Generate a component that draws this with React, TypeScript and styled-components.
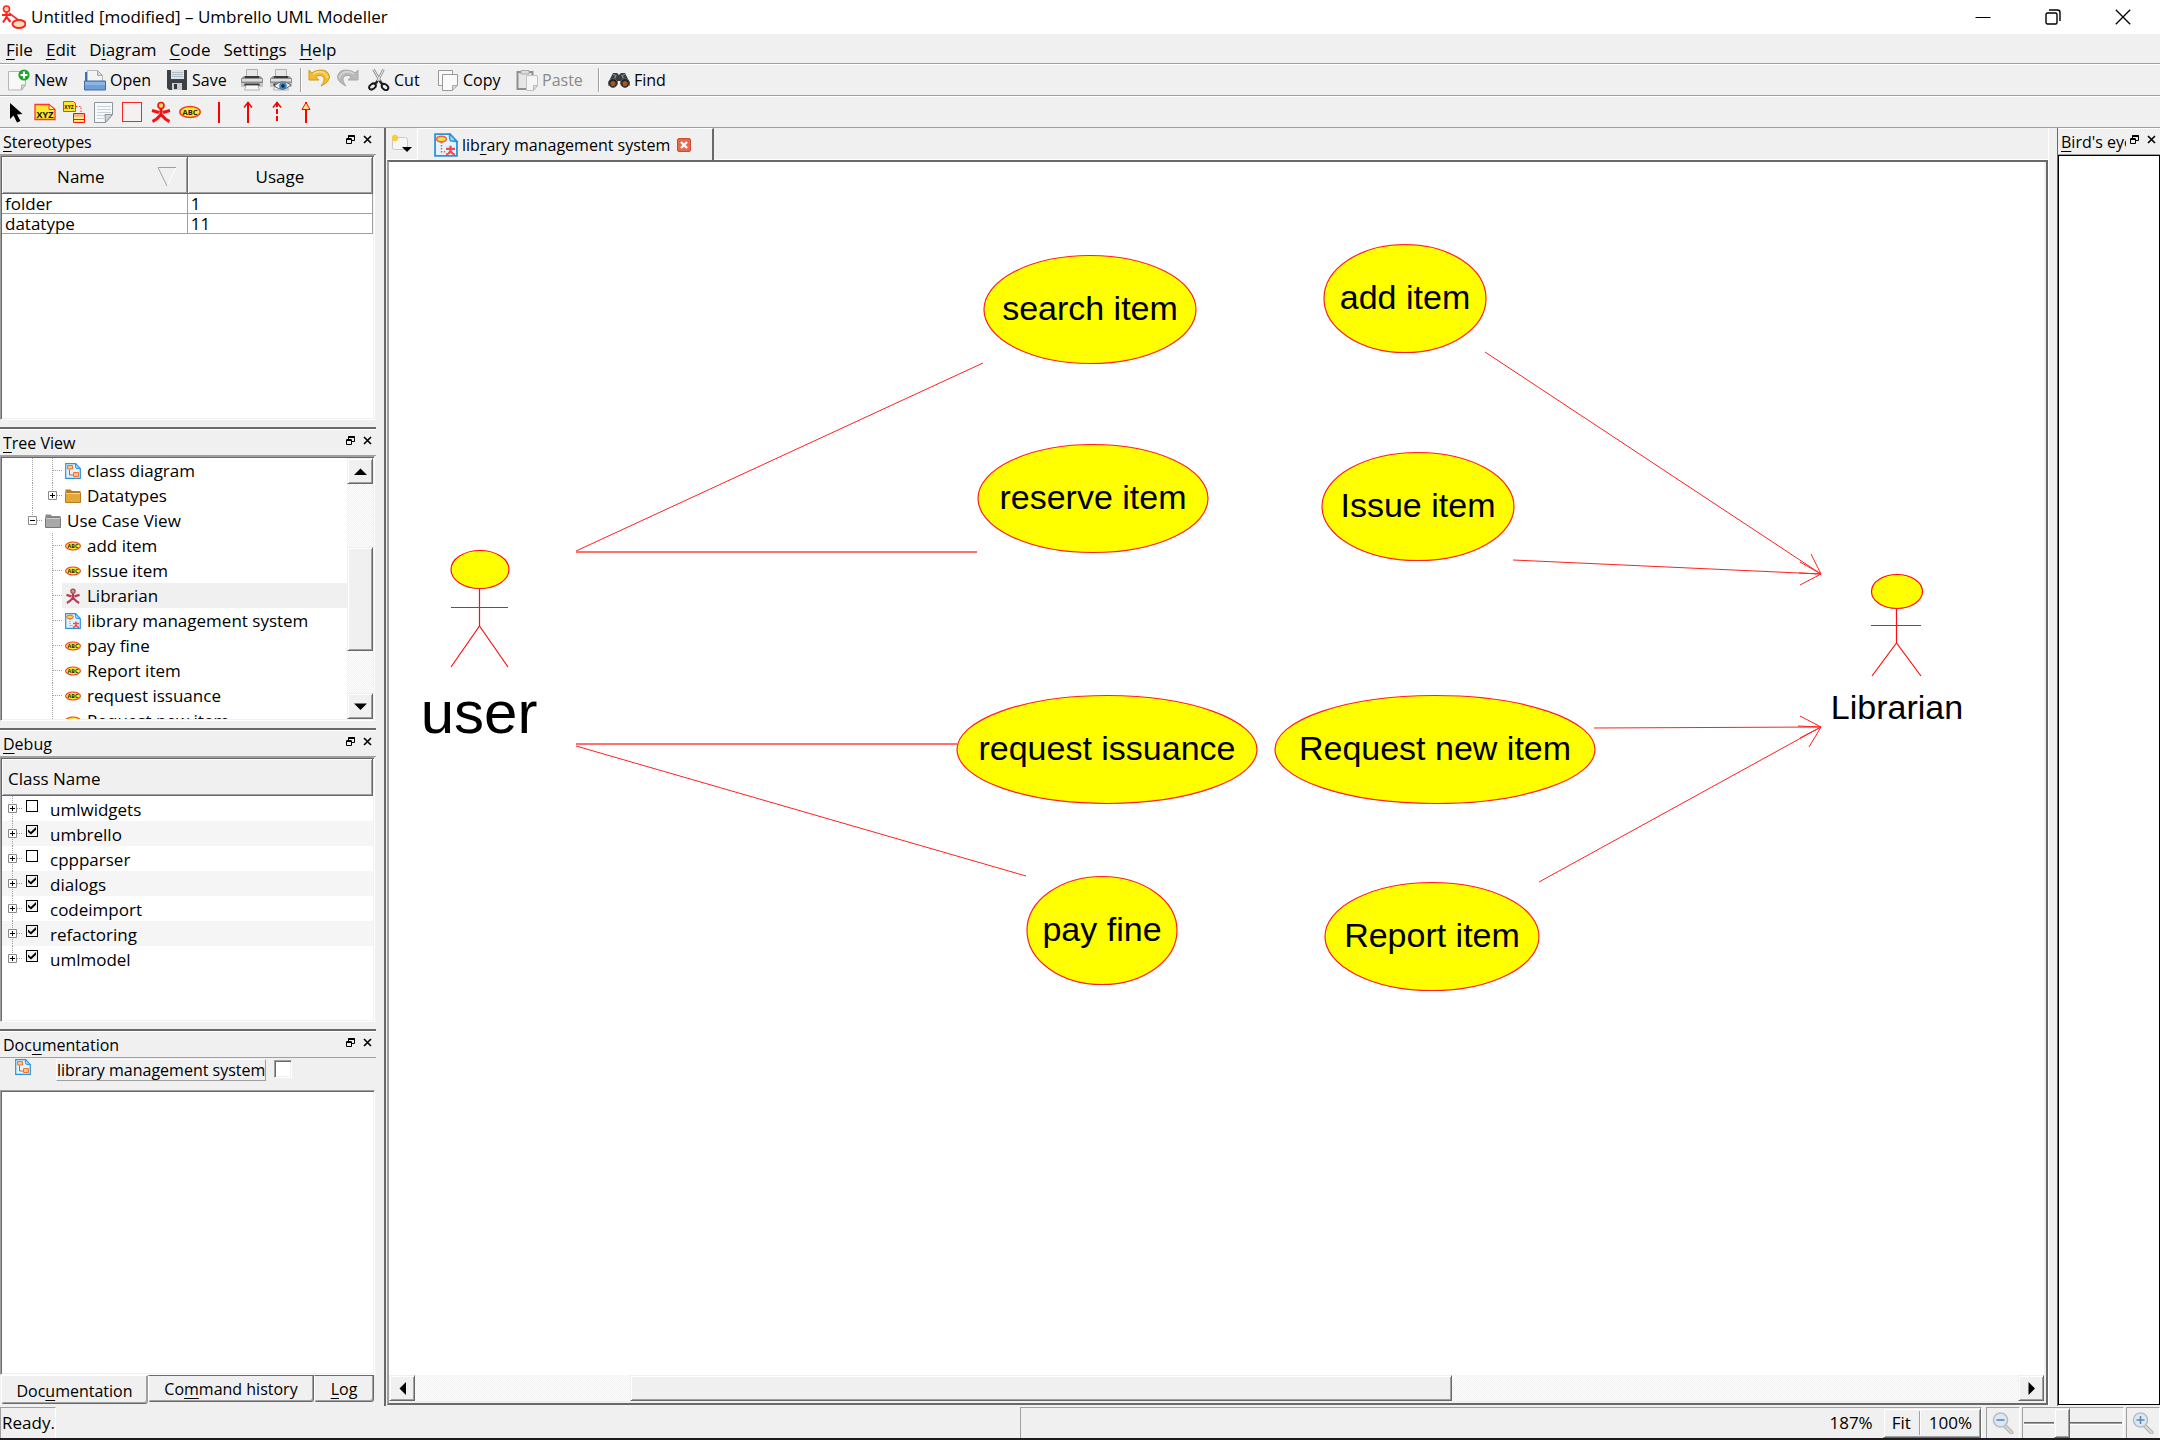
import React from "react";
import styled, { createGlobalStyle, css } from "styled-components";

const FACE = "#f0f0f0";
const SHADOW = "#a0a0a0";
const DARK = "#696969";

const GlobalStyle = createGlobalStyle`
  * { box-sizing: border-box; }
  body { margin: 0; background: ${FACE}; color: #000; }
  body, button, input, textarea, table {
    font-family: "Open Sans", "Noto Sans", sans-serif;
    font-size: 17px;
    line-height: 24px;
  }
  button { color: inherit; }
`;

const sunken = css`
  border: 1px solid;
  border-color: ${SHADOW} #fff #fff ${SHADOW};
  box-shadow: inset 1px 1px 0 ${DARK}, inset -1px -1px 0 ${FACE};
`;

const raised = css`
  border: 1px solid;
  border-color: ${FACE} ${DARK} ${DARK} ${FACE};
  box-shadow: inset 1px 1px 0 #fff, inset -1px -1px 0 ${SHADOW};
  background: ${FACE};
`;

/* ---------- window ---------- */

const Window = styled.div`
  display: flex;
  flex-direction: column;
  height: 100vh;
  border-bottom: 2px solid #1f1a1f;
  overflow: hidden;
`;

const TitleBar = styled.header`
  display: flex;
  align-items: center;
  height: 34px;
  flex: none;
  background: #fff;
  padding: 0 2px 0 1px;
`;

const WindowTitle = styled.h1`
  flex: 1;
  margin: 0 0 0 5px;
  font-size: 17px;
  font-weight: 400;
`;

const CaptionButton = styled.button`
  width: 70px;
  height: 34px;
  display: grid;
  place-items: center;
  border: 0;
  padding: 0;
  background: none;
`;

const MenuBar = styled.nav`
  display: flex;
  flex: none;
  gap: 13px;
  height: 30px;
  padding: 4px 6px 0;
  border-bottom: 1px solid ${SHADOW};
`;

const MenuButton = styled.button`
  border: 0;
  padding: 0;
  background: none;
  height: 24px;
`;

const Key = styled.u`
  text-decoration-thickness: 1px;
  text-underline-offset: 3px;
`;

const ToolBar = styled.div`
  display: flex;
  flex: none;
  align-items: center;
  height: 32px;
  border-top: 1px solid #fff;
  border-bottom: 1px solid ${SHADOW};
`;

const DrawBar = styled(ToolBar)`
  gap: 7px;
  padding-left: 5px;
`;

const ToolButton = styled.button<{ $w: number }>`
  display: flex;
  align-items: center;
  gap: 4px;
  width: ${(p) => p.$w}px;
  flex: none;
  height: 28px;
  border: 0;
  padding: 0;
  background: none;
  font-size: 16px;
  white-space: nowrap;
  &:disabled { color: #8a8a8a; }
  svg { flex: none; }
`;

const ToolGroup = styled.div`
  display: flex;
  align-items: center;
  padding-left: 8px;
  i + & { padding-left: 6px; }
  i + & + i + & { padding-left: 8px; }
`;

const ToolRule = styled.i`
  width: 2px;
  height: 24px;
  background: ${SHADOW};
  border-right: 1px solid #fff;
`;

const Workspace = styled.div`
  flex: 1;
  min-height: 0;
  display: grid;
  grid-template-columns: 376px minmax(0, 1fr) 103px;
  column-gap: 8px;
`;

/* ---------- docks ---------- */

const DockColumn = styled.aside`
  display: flex;
  flex-direction: column;
  min-height: 0;
`;

const Dock = styled.section<{ $share: number }>`
  flex: ${(p) => p.$share} 1 0;
  min-height: 0;
  display: flex;
  flex-direction: column;
  padding-bottom: 7px;
  & + & { border-top: 2px solid ${DARK}; }
  &:last-child { padding-bottom: 0; }
`;

const DockTitle = styled.div`
  display: flex;
  align-items: center;
  flex: none;
  height: 27px;
  padding-left: 3px;
  border-top: 1px solid #fff;
  border-bottom: 1px solid ${SHADOW};
`;

const DockName = styled.h2`
  flex: 1;
  min-width: 0;
  margin: 0;
  overflow: hidden;
  white-space: nowrap;
  font-size: 16px;
  font-weight: 400;
`;

const DockButton = styled.button`
  width: 17px;
  height: 17px;
  flex: none;
  display: grid;
  place-items: center;
  border: 0;
  padding: 0;
  background: none;
  margin-bottom: 4px;
`;

const Sunken = styled.div`
  ${sunken}
  flex: 1;
  min-height: 0;
  margin-right: 1px;
  padding: 1px;
  background: #fff;
  overflow: hidden;
`;

const StereoTable = styled.table`
  width: 100%;
  border-collapse: collapse;
  table-layout: fixed;
  td {
    height: 20px;
    padding: 0 3px;
    border-right: 1px solid ${SHADOW};
    border-bottom: 1px solid ${SHADOW};
    line-height: 19px;
  }
`;

const StereoHead = styled.th`
  height: 36px;
  padding: 0;
  font-weight: 400;
  background: ${FACE};
  border-right: 1px solid ${DARK};
  border-bottom: 1px solid ${DARK};
  box-shadow: inset 1px 1px 0 #fff, inset -1px -1px 0 ${SHADOW};
`;

const HeadCell = styled.div`
  display: flex;
  align-items: center;
  justify-content: center;
  gap: 52px;
  padding-top: 4px;
`;

const SortableCell = styled(HeadCell)`
  padding: 4px 9px 0 54px;
`;

const TreeFrame = styled(Sunken)`
  display: flex;
`;

const TreeList = styled.ul`
  flex: 1;
  min-width: 0;
  margin: 0;
  padding: 0;
  list-style: none;
  overflow: hidden;
`;

const TreeRow = styled.li`
  display: flex;
  height: 25px;
`;

type GuideProps = { $line?: "full" | "up" | "down" | "none"; $branch?: boolean };

const Guide = styled.span<GuideProps>`
  position: relative;
  width: 20px;
  flex: none;
  display: grid;
  place-items: center;
  &::before {
    content: "";
    position: absolute;
    left: 10px;
    top: ${(p) => (p.$line === "down" ? "12px" : "0")};
    bottom: ${(p) => (p.$line === "up" ? "12px" : "0")};
    border-left: ${(p) => (p.$line && p.$line !== "none" ? `1px dotted ${SHADOW}` : "0")};
  }
  &::after {
    content: "";
    position: absolute;
    left: 10px;
    right: 0;
    top: 12px;
    border-top: ${(p) => (p.$branch ? `1px dotted ${SHADOW}` : "0")};
  }
`;

const ExpandButton = styled.button`
  position: relative;
  z-index: 1;
  width: 9px;
  height: 9px;
  display: block;
  padding: 0;
  border: 0;
  background: #fff;
  line-height: 0;
`;

const TreeLabel = styled.span<{ $selected?: boolean }>`
  flex: 1;
  display: flex;
  align-items: center;
  gap: 6px;
  padding-left: 3px;
  white-space: nowrap;
  background: ${(p) => (p.$selected ? FACE : "none")};
  svg { flex: none; }
`;

/* ---------- scroll bars ---------- */

const dither = css`
  background: repeating-conic-gradient(#ffffff 0% 25%, ${FACE} 0% 50%) 0 0 / 2px 2px;
`;

const VScroll = styled.div`
  ${dither}
  width: 26px;
  flex: none;
  display: flex;
  flex-direction: column;
`;

const HScroll = styled.div`
  ${dither}
  height: 26px;
  flex: none;
  display: flex;
`;

const ScrollButton = styled.button`
  ${raised}
  width: 26px;
  height: 26px;
  flex: none;
  padding: 0;
  display: grid;
  place-items: center;
`;

const Room = styled.div<{ $share: number }>`
  flex: ${(p) => p.$share} 1 0;
`;

const Thumb = styled(Room)`
  ${raised}
`;

/* ---------- debug ---------- */

const DebugHead = styled.div`
  height: 37px;
  padding: 8px 0 0 6px;
  background: ${FACE};
  border-right: 1px solid ${DARK};
  border-bottom: 1px solid ${DARK};
  box-shadow: inset 1px 1px 0 #fff, inset -1px -1px 0 ${SHADOW};
`;

const DebugList = styled(TreeList)`
  li:nth-child(even) { background: #f5f5f5; }
`;

const DebugLabel = styled.label`
  display: flex;
  padding: 2px 0 0 4px;
  gap: 12px;
`;

const Tick = styled.input`
  appearance: none;
  width: 12px;
  height: 12px;
  flex: none;
  margin: 2px 0 0;
  border: 1px solid #000;
  background: #fff;
  &:checked { background: ${FACE}; }
  &:checked::before {
    content: "";
    display: block;
    width: 8px;
    height: 8px;
    margin: 1px;
    background: #000;
    clip-path: polygon(0 30%, 35% 62%, 100% 0, 100% 34%, 38% 95%, 0 62%);
  }
`;

/* ---------- documentation ---------- */

const DocRow = styled.div`
  display: flex;
  flex: none;
  height: 32px;
  padding: 1px 0 0 15px;
`;

const DocName = styled.label`
  height: 22px;
  line-height: 20px;
  margin-left: 25px;
  border: 1px solid;
  border-color: #fff ${SHADOW} ${SHADOW} #fff;
  font-size: 16px;
`;

const DocCheck = styled.input`
  appearance: none;
  ${sunken}
  width: 18px;
  height: 18px;
  margin: 1px 0 0 8px;
  background: #fff;
`;

const DocText = styled.textarea`
  ${sunken}
  flex: 1;
  width: calc(100% - 1px);
  resize: none;
  outline: 0;
  background: #fff;
`;

const BottomTabs = styled.div`
  display: flex;
  flex: none;
  align-items: flex-start;
  height: 31px;
  padding: 0 2px 0 1px;
`;

const BottomTab = styled.button<{ $on?: boolean; $w: number }>`
  width: ${(p) => p.$w}px;
  height: ${(p) => (p.$on ? 29 : 27)}px;
  padding: ${(p) => (p.$on ? "2px 0 0" : "0")};
  background: ${FACE};
  font-size: 16px;
  white-space: nowrap;
  border: 1px solid;
  border-color: ${(p) => (p.$on ? `#fff ${SHADOW} ${DARK} #fff` : `${DARK} ${DARK} ${DARK} #fff`)};
  border-radius: 0 0 3px 3px;
  box-shadow: inset -1px -1px 0 ${SHADOW};
`;

/* ---------- canvas ---------- */

const Center = styled.main`
  display: flex;
  flex-direction: column;
  min-width: 0;
  min-height: 0;
  border: solid;
  border-width: 0 1px 0 2px;
  border-color: #fff #fff #fff ${DARK};
`;

const TabStrip = styled.div`
  display: flex;
  flex: none;
  height: 32px;
  border-bottom: 1px solid #fff;
`;

const NewTabButton = styled.button`
  width: 31px;
  padding: 0 0 0 5px;
  border: 0;
  background: none;
  display: flex;
  align-items: center;
`;

const CanvasTab = styled.div`
  display: flex;
  align-items: center;
  width: 297px;
  margin-bottom: -1px;
  padding-left: 16px;
  border: solid;
  border-width: 1px 2px 0 1px;
  border-color: #fff ${DARK} #fff #fff;
  background: ${FACE};
`;

const CanvasTabName = styled.span`
  margin-left: 4px;
  font-size: 16px;
  white-space: nowrap;
`;

const TabClose = styled.button`
  width: 14px;
  height: 14px;
  margin-left: 7px;
  padding: 0;
  border: 0;
  background: none;
  line-height: 0;
`;

const CanvasFrame = styled.div`
  flex: 1;
  min-height: 0;
  display: flex;
  flex-direction: column;
  margin: 0 0 1px 1px;
  border: 2px solid;
  border-color: ${DARK} ${DARK} ${DARK} ${SHADOW};
  background: #fff;
  box-shadow: inset -2px -2px 0 ${FACE};
  padding: 0 2px 2px 0;
`;

const Drawing = styled.svg`
  flex: 1;
  width: 100%;
  min-height: 0;
  display: block;
  font-family: "Liberation Sans", Arial, sans-serif;
  font-size: 34px;
`;

const BirdDock = styled.aside`
  display: flex;
  flex-direction: column;
  min-width: 0;
  border-left: 1px solid ${DARK};
`;

const BirdView = styled.div`
  flex: 1;
  margin-bottom: 1px;
  background: #fff;
  border: 1px solid #000;
`;

/* ---------- status bar ---------- */

const StatusBar = styled.footer`
  display: grid;
  grid-template-columns: 56px minmax(0, 1fr) 966px 34px 106px 34px;
  flex: none;
  height: 32px;
  padding-top: 1px;
`;

const StatusCell = styled.div`
  display: flex;
  align-items: center;
  min-width: 0;
  border: 1px solid;
  border-color: ${SHADOW} #fff ${FACE} ${SHADOW};
`;

const ReadyCell = styled(StatusCell)`
  padding-left: 1px;
`;

const Spacer = styled.div``;

const ZoomCell = styled(StatusCell)`
  justify-content: flex-end;
  margin-right: 4px;
`;

const ZoomButtons = styled.div`
  ${raised}
  display: flex;
  align-items: center;
  height: 30px;
  margin-left: 10px;
`;

const ZoomButton = styled.button`
  border: 0;
  padding: 0 8px;
  background: none;
`;

const IconButton = styled.button`
  width: 100%;
  height: 100%;
  display: grid;
  place-items: center;
  border: 0;
  padding: 0;
  background: none;
`;

const SliderCell = styled(StatusCell)`
  margin: 0 2px;
`;

const ZoomSlider = styled.input`
  appearance: none;
  width: 98px;
  height: 30px;
  margin: 0 1px;
  background: linear-gradient(${DARK} 0 1px, ${SHADOW} 1px 2px, #fff 2px 3px) center / 100% 3px no-repeat;
  &::-webkit-slider-thumb {
    ${raised}
    appearance: none;
    width: 16px;
    height: 30px;
  }
`;

/* ---------- icons ---------- */

const Svg = ({ s = 22, children, vb }: { s?: number; vb?: string; children: React.ReactNode }) => (
  <svg width={s} height={s} viewBox={vb || `0 0 ${s} ${s}`} fill="none" aria-hidden="true">
    {children}
  </svg>
);

const LogoIcon = () => (
  <Svg s={25}>
    <path d="M8 8L20 17" stroke="#e33" strokeWidth="1.6" />
    <circle cx="5.500" cy="4" r="3" fill="#fdd9b0" stroke="#f22" strokeWidth="1.6" />
    <path d="M1 10h9M5.500 7v6M5.500 12L2 17.500M5.500 12l4 5" stroke="#f22" strokeWidth="2.200" />
    <ellipse cx="18" cy="19" rx="6.500" ry="4" fill="#fbe3b6" stroke="#f22" strokeWidth="2" />
  </Svg>
);

const NewIcon = () => (
  <Svg>
    <path d="M.5 2.500h17v13l-4 5.500H.5z" fill="#f8f8f8" stroke="#b5b5b5" />
    <path d="M13.500 21v-5h4z" fill="#ddd" stroke="#aaa" />
    <circle cx="16" cy="6" r="5.600" fill="#1da32a" />
    <path d="M16 2.500v7M12.500 6h7" stroke="#fff" strokeWidth="2.200" />
  </Svg>
);

const OpenIcon = () => (
  <Svg>
    <path d="M1 12V3h3v9z" fill="#3b6fae" />
    <path d="M3.500 13V1.500h10l5 5V13z" fill="#f3f3f3" stroke="#b8b8b8" />
    <path d="M13.500 1.500v5h5z" fill="#d5d5d5" stroke="#aaa" />
    <path d="M.5 12h21v9H.5z" fill="#6f9fd6" stroke="#3f6da8" />
    <path d="M1 13h20v3H1z" fill="#8fb6e3" />
  </Svg>
);

const SaveIcon = () => (
  <Svg>
    <path d="M1 1h20v20H3l-2-2z" fill="#3d4145" />
    <path d="M5 1h13v9H5z" fill="#dfe3e8" />
    <path d="M6 3.500h11M6 5.500h11M6 7.500h11" stroke="#b4bcc6" />
    <path d="M6 14h10v7H6z" fill="#c9cdd2" />
    <path d="M8 15h3v5H8z" fill="#34383c" />
  </Svg>
);

const PrinterShape = () => (
  <>
    <path d="M5.500 8V.500h11V8z" fill="#e6e8e8" stroke="#b0b0b0" />
    <path d="M0 9.500l3-2.500h16l3 2.500V15H0z" fill="#8e9090" />
    <path d="M1 10h20v2.500H1z" fill="#dcdede" />
    <path d="M4 7h14v2H4z" fill="#3a3a3a" />
    <path d="M0 14h22v4H0z" fill="#c4c6c6" />
    <path d="M3.500 14.500h15v2.500h-15z" fill="#3a3a3a" />
    <path d="M5 16.500h12l1.500 4.500h-15z" fill="#f6f6f6" stroke="#b0b0b0" />
  </>
);

const PrintIcon = () => (
  <Svg>
    <PrinterShape />
  </Svg>
);

const PreviewIcon = () => (
  <Svg>
    <PrinterShape />
    <path d="M4 17q8-8 17-1-8 8-17 1z" fill="#e9eef2" stroke="#59616a" />
    <circle cx="13" cy="17" r="3.800" fill="#3f83b8" />
    <circle cx="13" cy="17" r="1.700" fill="#10263a" />
  </Svg>
);

const curl = "M1 1v10h10L7.500 7.800q5-3 8 .4 2 3.300-2.500 8.800 8.500-4 8.500-9.500Q20 0 11 1.200 6.500 1.800 3.800 4z";

const UndoIcon = () => (
  <Svg>
    <path d={curl} fill="#f2bd2f" stroke="#d09a1c" />
    <path d="M5 5q6-4 11-1 3 2 3.500 5" stroke="#fbe08b" strokeWidth="1.500" />
  </Svg>
);

const RedoIcon = () => (
  <Svg>
    <g transform="translate(22 0) scale(-1 1)">
      <path d={curl} fill="#b9b9b9" stroke="#a8a8a8" />
      <path d="M5 5q6-4 11-1 3 2 3.500 5" stroke="#d9d9d9" strokeWidth="1.500" />
    </g>
  </Svg>
);

const CutIcon = () => (
  <Svg>
    <path d="M5.500.5L14 15M15.500.5L8 15" stroke="#8f8f8f" strokeWidth="2.600" />
    <path d="M5.500.5L14 15M15.500.5L8 15" stroke="#ececec" strokeWidth="1" />
    <path d="M9.500 12L7 15M11.500 12l3 3.500" stroke="#222" strokeWidth="2" />
    <ellipse cx="4.500" cy="17.500" rx="3.600" ry="2.500" transform="rotate(-35 4.500 17.500)" stroke="#1a1a1a" strokeWidth="2" />
    <ellipse cx="17" cy="18" rx="3.600" ry="2.500" transform="rotate(40 17 18)" stroke="#1a1a1a" strokeWidth="2" />
  </Svg>
);

const CopyIcon = () => (
  <Svg>
    <path d="M1.500 1.500h14v15h-14z" fill="#fafafa" stroke="#999" />
    <path d="M5.500 5.500h15v11l-5 5h-10z" fill="#fafafa" stroke="#999" />
    <path d="M15.500 21.500v-5h5z" fill="#d8d8d8" stroke="#aaa" />
  </Svg>
);

const PasteIcon = () => (
  <Svg>
    <path d="M1.500 3h15v17h-15z" fill="#e6e6e6" stroke="#8f8f8f" strokeWidth="2" />
    <path d="M5 1.500h8v3.500H5z" fill="#ddd" stroke="#aaa" />
    <path d="M10.500 6.500h11v10l-4 5h-7z" fill="#f5f5f5" stroke="#c2c2c2" />
    <path d="M17.500 21.500v-5h4z" fill="#ddd" stroke="#bbb" />
  </Svg>
);

const FindIcon = () => (
  <Svg>
    <path d="M5 4h4l2 2 2-2h4l4.500 9v4h-8l-1-5h-3l-1 5h-8v-4z" fill="#3a3d40" />
    <path d="M5 5.500l3 1-3 6M17 5.500l-3 1 3 6" stroke="#8a8f94" strokeWidth="1.200" />
    <circle cx="5" cy="14" r="4.400" fill="#222" stroke="#55585c" />
    <circle cx="17" cy="14" r="4.400" fill="#222" stroke="#55585c" />
    <circle cx="5" cy="14.500" r="2.600" fill="#a9561c" />
    <circle cx="17" cy="14.500" r="2.600" fill="#a9561c" />
  </Svg>
);

const PointerIcon = () => (
  <Svg>
    <path d="M5 2v16l3.500-3.500 3.500 7 3.500-1.500-3.500-6.500 5.500-.5z" fill="#000" />
  </Svg>
);

const glyph: React.CSSProperties = { fontFamily: "Open Sans, sans-serif", fontWeight: 700 };

const ObjectIcon = () => (
  <Svg>
    <path d="M1 3.500h14l6 5v10H1z" fill="#fbe82c" stroke="#f33" strokeWidth="1.300" />
    <path d="M15 3.500v5h6z" fill="#fff3a0" stroke="#f33" />
    <text x="11" y="16.500" textAnchor="middle" fontSize="9" fill="#111" style={glyph}>XYZ</text>
  </Svg>
);

const LinkedIcon = () => (
  <Svg>
    <path d="M.5.500h10l2 2v8H.5z" fill="#fbe82c" stroke="#f33" />
    <text x="6" y="8" textAnchor="middle" fontSize="5" fill="#111" style={glyph}>XYZ</text>
    <path d="M13 5.500h5v6" stroke="#f33" strokeDasharray="1.500 1.500" />
    <path d="M10.500 12.500h11v9h-11z" fill="#ffe985" stroke="#f11" />
    <path d="M11 13h10v3H11z" fill="#f7b57a" />
    <path d="M10 18.500h12" stroke="#f11" />
  </Svg>
);

const NoteIcon = () => (
  <Svg>
    <path d="M2.500 1.500h18v12l-7 8h-11z" fill="#f7f8f9" stroke="#8f9499" />
    <path d="M5 5.500h14M5 8.500h14M5 11.500h14M5 14.500h8M5 17.500h7" stroke="#c8d0d8" />
    <path d="M13.500 21.500l-.5-8 7.500 0z" fill="#ced2d5" stroke="#8f9499" />
  </Svg>
);

const BoxIcon = () => (
  <Svg>
    <rect x="1.500" y="1.500" width="19" height="19" fill="#f6f0f0" stroke="#f22" />
  </Svg>
);

const actorLimbs = "M2 9.500l7 2M20 9.500l-7 2M11 8v6M2.500 20.500q4-1.500 8-6.500M19.500 20.500q-4-1.500-8-6.500";

const ActorIcon = ({ s = 22, c = "#f21212", head = "#fbd75a" }: { s?: number; c?: string; head?: string }) => (
  <Svg s={s} vb="0 0 22 22">
    <path d={actorLimbs} stroke={c} strokeWidth="3" />
    <circle cx="11" cy="4.500" r="3" fill={head} stroke={c} strokeWidth="1.600" />
  </Svg>
);

const UseCaseIcon = ({ s = 22 }: { s?: number }) => (
  <Svg s={s} vb="0 0 22 22">
    <ellipse cx="11" cy="11" rx="10.200" ry="5.400" fill="#fbe82c" stroke="#f03a1a" strokeWidth="1.500" />
    <text x="11" y="13.800" textAnchor="middle" fontSize="7.500" fill="#222" style={glyph}>ABC</text>
  </Svg>
);

const LineIcon = ({ kind }: { kind: "plain" | "arrow" | "dashed" | "hollow" }) => (
  <Svg>
    <path d="M11 1v21" stroke="#f00" strokeWidth="2" strokeDasharray={kind === "dashed" ? "5 2" : undefined} />
    {(kind === "arrow" || kind === "dashed") && <path d="M7 6.500l4-5 4 5" stroke="#f00" strokeWidth="1.500" />}
    {kind === "hollow" && <path d="M7 8.500l4-7 4 7z" fill="#ffe27a" stroke="#f00" />}
  </Svg>
);

const DiagramIcon = ({ s = 16, useCase }: { s?: number; useCase?: boolean }) => (
  <Svg s={s} vb="0 0 16 16">
    <path d="M.7.700h10l4.600 5v9.600H.7z" fill="#e2f5fe" stroke="#2a93e0" strokeWidth="1.200" />
    <path d="M10.500.700q-.5 3 .5 4.500l4.300.5z" fill="#a8dcf8" stroke="#2a93e0" />
    {useCase ? (
      <>
        <ellipse cx="5" cy="4" rx="3.300" ry="1.900" fill="#f0dc4a" stroke="#f0603a" />
        <path d="M5 6v6.500h2.500" stroke="#f0603a" strokeDasharray="1 1" />
        <path d="M8 10.500h6M11 8.500v3.500M8 14.500q2-.5 3-2.500 1 2 3 2.500" stroke="#f3484c" strokeWidth="1.500" />
      </>
    ) : (
      <>
        <path d="M2.500 2.500h5v3.500h-5z" fill="#ffc48a" stroke="#ee7530" />
        <path d="M8.500 9.500h5v4h-5z" fill="#ffc48a" stroke="#ee7530" />
        <path d="M4.500 6.500v5.500h3.500" stroke="#e8532c" />
      </>
    )}
  </Svg>
);

const FolderIcon = ({ gray }: { gray?: boolean }) => (
  <Svg s={16}>
    <path d="M.5 1.500h5l1.500 1.500h8.500v11H.5z" fill={gray ? "#8a8a8a" : "#b87d1c"} />
    <path d="M.5 5h15v9.500H.5z" fill={gray ? "#a8a8a8" : "#e3a73a"} stroke={gray ? "#777" : "#b87d1c"} />
    <path d="M1 5.500h14" stroke={gray ? "#d0d0d0" : "#f7d588"} />
  </Svg>
);

const ExpandIcon = ({ open }: { open?: boolean }) => (
  <Svg s={9}>
    <path d="M.5.500h8v8h-8z" fill="#fff" stroke="#8a8a8a" />
    <path d={open ? "M2 4.500h5" : "M2 4.500h5M4.500 2v5"} stroke="#000" />
  </Svg>
);

const FloatIcon = () => (
  <Svg s={9}>
    <path d="M2.500 3V.500h6v5H6" stroke="#000" />
    <path d="M2.500 1h6" stroke="#000" strokeWidth="2" />
    <path d="M.5 4h5v4.500h-5z" stroke="#000" />
    <path d="M.5 4h5" stroke="#000" strokeWidth="2" />
  </Svg>
);

const CloseIcon = () => (
  <Svg s={9}>
    <path d="M1 1l7 7M8 1L1 8" stroke="#000" strokeWidth="1.600" />
  </Svg>
);

const TabCloseIcon = () => (
  <Svg s={14}>
    <rect x=".5" y=".5" width="13" height="13" rx="1.500" fill="#e5694f" stroke="#cf4a30" />
    <path d="M4 4l6 6M10 4l-6 6" stroke="#fff" strokeWidth="2.400" />
  </Svg>
);

const NewTabIcon = () => (
  <Svg s={22}>
    <rect x="1.500" y="4.500" width="15" height="12" rx="2" fill="#f6f6f6" stroke="#c9c9c9" />
    <circle cx="4" cy="5" r="3.200" fill="#f5cf3c" />
    <path d="M11 14h10l-5 5z" fill="#000" />
  </Svg>
);

const MagnifierIcon = ({ plus }: { plus?: boolean }) => (
  <Svg>
    <path d="M12.500 13.500l7 7" stroke="#b3b3b3" strokeWidth="4" strokeLinecap="round" />
    <path d="M12.500 13.500l7 7" stroke="#d6d6d6" strokeWidth="2" strokeLinecap="round" />
    <circle cx="8.500" cy="8" r="7" fill="#dbe9f5" stroke="#b9bec4" strokeWidth="1.600" />
    <path d={plus ? "M4.500 8h8M8.500 4v8" : "M4.500 8h8"} stroke="#5c87b8" strokeWidth="1.600" />
  </Svg>
);

const arrowPaths = {
  up: "M0 10L6.500 3.500 13 10z",
  down: "M0 3.500L6.500 10 13 3.500z",
  left: "M10 0L3.500 6.500 10 13z",
  right: "M3.500 0L10 6.500 3.500 13z",
};

const ArrowIcon = ({ dir }: { dir: keyof typeof arrowPaths }) => (
  <Svg s={13}>
    <path d={arrowPaths[dir]} fill="#000" />
  </Svg>
);

/* ---------- parts ---------- */

const Mnemonic = ({ text }: { text: string }) => {
  const at = text.indexOf("&");
  if (at < 0) return <>{text}</>;
  return (
    <>
      {text.slice(0, at)}
      <Key>{text[at + 1]}</Key>
      {text.slice(at + 2)}
    </>
  );
};

const TitleRow = ({ text }: { text: string }) => (
  <DockTitle>
    <DockName>
      <Mnemonic text={text} />
    </DockName>
    <DockButton aria-label="Float">
      <FloatIcon />
    </DockButton>
    <DockButton aria-label="Close">
      <CloseIcon />
    </DockButton>
  </DockTitle>
);

const menus = ["&File", "&Edit", "D&iagram", "&Code", "Setti&ngs", "&Help"];

const treeLeaves: { text: string; kind: "case" | "actor" | "diagram" }[] = [
  { text: "add item", kind: "case" },
  { text: "Issue item", kind: "case" },
  { text: "Librarian", kind: "actor" },
  { text: "library management system", kind: "diagram" },
  { text: "pay fine", kind: "case" },
  { text: "Report item", kind: "case" },
  { text: "request issuance", kind: "case" },
  { text: "Request new item", kind: "case" },
];

const debugClasses: [string, boolean][] = [
  ["umlwidgets", false],
  ["umbrello", true],
  ["cppparser", false],
  ["dialogs", true],
  ["codeimport", true],
  ["refactoring", true],
  ["umlmodel", true],
];

const useCases = [
  { text: "search item", x: 701, y: 147, rx: 106 },
  { text: "reserve item", x: 704, y: 336, rx: 115 },
  { text: "request issuance", x: 718, y: 587, rx: 150 },
  { text: "pay fine", x: 713, y: 768, rx: 75 },
  { text: "add item", x: 1016, y: 136, rx: 81 },
  { text: "Issue item", x: 1029, y: 344, rx: 96 },
  { text: "Request new item", x: 1046, y: 587, rx: 160 },
  { text: "Report item", x: 1043, y: 774, rx: 107 },
];

const UseCaseDiagram = () => (
  <Drawing role="img" aria-label="library management system">
    <g stroke="#ff2020" fill="none">
      <path d="M187 389L594 201M187 584L637 714" />
      <path d="M187 390H588M187 582H568" strokeWidth="2" stroke="#ff7070" />
      <path d="M1096 190L1432 412L1422 392M1432 412L1410 411" />
      <path d="M1124 398L1432 412L1411 400M1432 412L1411 423" />
      <path d="M1205 566L1432 565L1411 554M1432 565L1411 576" />
      <path d="M1150 720L1432 565L1420 585M1432 565L1409 564" />
    </g>
    {useCases.map((u) => (
      <g key={u.text}>
        <ellipse cx={u.x} cy={u.y + 0.5} rx={u.rx} ry="54" fill="#ffff00" stroke="#ff2020" strokeWidth="1.200" />
        <text x={u.x} y={u.y + 11} textAnchor="middle">{u.text}</text>
      </g>
    ))}
    <g stroke="#ff1010" strokeWidth="1.200">
      <ellipse cx="91" cy="407.500" rx="29" ry="19" fill="#ffff00" />
      <path d="M90.500 426v38M62 445.500h57M62 505l28.500-41L119 505" fill="none" />
      <ellipse cx="1508" cy="429.500" rx="25.500" ry="17" fill="#ffff00" />
      <path d="M1507.500 446v35M1482 463.500h50M1483 514l24.500-33L1532 514" fill="none" />
    </g>
    <text x="90" y="571" textAnchor="middle" fontSize="60">user</text>
    <text x="1508" y="557" textAnchor="middle">Librarian</text>
  </Drawing>
);

export default function App() {
  return (
    <Window>
      <GlobalStyle />
      <TitleBar>
        <LogoIcon />
        <WindowTitle>Untitled [modified] – Umbrello UML Modeller</WindowTitle>
        <CaptionButton aria-label="Minimize">
          <Svg s={16}>
            <path d="M.5 8.500h15" stroke="#000" />
          </Svg>
        </CaptionButton>
        <CaptionButton aria-label="Restore">
          <Svg s={16}>
            <rect x="1" y="4" width="11" height="11" rx="1.500" stroke="#000" strokeWidth="1.400" />
            <path d="M4 1h8.500q2.500 0 2.500 2.500V12" stroke="#000" strokeWidth="1.400" />
          </Svg>
        </CaptionButton>
        <CaptionButton aria-label="Close window">
          <Svg s={16}>
            <path d="M.8.800l14.400 14.400M15.200.800L.8 15.200" stroke="#000" strokeWidth="1.300" />
          </Svg>
        </CaptionButton>
      </TitleBar>

      <MenuBar>
        {menus.map((m) => (
          <MenuButton key={m}>
            <Mnemonic text={m} />
          </MenuButton>
        ))}
      </MenuBar>

      <ToolBar>
        <ToolGroup>
          <ToolButton $w={76}><NewIcon />New</ToolButton>
          <ToolButton $w={82}><OpenIcon />Open</ToolButton>
          <ToolButton $w={75}><SaveIcon />Save</ToolButton>
          <ToolButton $w={29} aria-label="Print"><PrintIcon /></ToolButton>
          <ToolButton $w={30} aria-label="Print preview"><PreviewIcon /></ToolButton>
        </ToolGroup>
        <ToolRule />
        <ToolGroup>
          <ToolButton $w={29} aria-label="Undo"><UndoIcon /></ToolButton>
          <ToolButton $w={31} aria-label="Redo"><RedoIcon /></ToolButton>
          <ToolButton $w={69}><CutIcon />Cut</ToolButton>
          <ToolButton $w={79}><CopyIcon />Copy</ToolButton>
          <ToolButton $w={82} disabled><PasteIcon />Paste</ToolButton>
        </ToolGroup>
        <ToolRule />
        <ToolGroup>
          <ToolButton $w={80}><FindIcon />Find</ToolButton>
        </ToolGroup>
      </ToolBar>

      <DrawBar>
        <ToolButton $w={22} aria-label="Select"><PointerIcon /></ToolButton>
        <ToolButton $w={22} aria-label="Object"><ObjectIcon /></ToolButton>
        <ToolButton $w={22} aria-label="Linked object"><LinkedIcon /></ToolButton>
        <ToolButton $w={22} aria-label="Note"><NoteIcon /></ToolButton>
        <ToolButton $w={22} aria-label="Box"><BoxIcon /></ToolButton>
        <ToolButton $w={22} aria-label="Actor"><ActorIcon /></ToolButton>
        <ToolButton $w={22} aria-label="Use case"><UseCaseIcon /></ToolButton>
        <ToolButton $w={22} aria-label="Association"><LineIcon kind="plain" /></ToolButton>
        <ToolButton $w={22} aria-label="Directed association"><LineIcon kind="arrow" /></ToolButton>
        <ToolButton $w={22} aria-label="Dependency"><LineIcon kind="dashed" /></ToolButton>
        <ToolButton $w={22} aria-label="Generalisation"><LineIcon kind="hollow" /></ToolButton>
      </DrawBar>

      <Workspace>
        <DockColumn>
          <Dock $share={292}>
            <TitleRow text="&Stereotypes" />
            <Sunken>
              <StereoTable>
                <thead>
                  <tr>
                    <StereoHead>
                      <SortableCell>
                        Name
                        <Svg s={20}>
                          <path d="M19 .5L10 19" stroke="#fff" />
                          <path d="M10 19L1 .500h18" stroke="#a0a0a0" />
                        </Svg>
                      </SortableCell>
                    </StereoHead>
                    <StereoHead>
                      <HeadCell>Usage</HeadCell>
                    </StereoHead>
                  </tr>
                </thead>
                <tbody>
                  <tr><td>folder</td><td>1</td></tr>
                  <tr><td>datatype</td><td>11</td></tr>
                </tbody>
              </StereoTable>
            </Sunken>
          </Dock>

          <Dock $share={292}>
            <TitleRow text="&Tree View" />
            <TreeFrame>
              <TreeList>
                <TreeRow>
                  <Guide />
                  <Guide $line="full" />
                  <Guide $line="full" $branch />
                  <TreeLabel><DiagramIcon />class diagram</TreeLabel>
                </TreeRow>
                <TreeRow>
                  <Guide />
                  <Guide $line="full" />
                  <Guide $line="up" $branch>
                    <ExpandButton aria-label="Expand Datatypes"><ExpandIcon /></ExpandButton>
                  </Guide>
                  <TreeLabel><FolderIcon />Datatypes</TreeLabel>
                </TreeRow>
                <TreeRow>
                  <Guide />
                  <Guide $line="up" $branch>
                    <ExpandButton aria-label="Collapse Use Case View"><ExpandIcon open /></ExpandButton>
                  </Guide>
                  <TreeLabel><FolderIcon gray />Use Case View</TreeLabel>
                </TreeRow>
                {treeLeaves.map((leaf) => (
                  <TreeRow key={leaf.text}>
                    <Guide />
                    <Guide />
                    <Guide $line="full" $branch />
                    <TreeLabel $selected={leaf.kind === "actor"}>
                      {leaf.kind === "case" && <UseCaseIcon s={16} />}
                      {leaf.kind === "actor" && <ActorIcon s={16} c="#b83a55" head="#b9b060" />}
                      {leaf.kind === "diagram" && <DiagramIcon useCase />}
                      {leaf.text}
                    </TreeLabel>
                  </TreeRow>
                ))}
              </TreeList>
              <VScroll>
                <ScrollButton aria-label="Scroll up"><ArrowIcon dir="up" /></ScrollButton>
                <Room $share={63} />
                <Thumb $share={103} />
                <Room $share={42} />
                <ScrollButton aria-label="Scroll down"><ArrowIcon dir="down" /></ScrollButton>
              </VScroll>
            </TreeFrame>
          </Dock>

          <Dock $share={292}>
            <TitleRow text="&Debug" />
            <Sunken>
              <DebugHead>Class Name</DebugHead>
              <DebugList>
                {debugClasses.map(([name, on], i) => (
                  <TreeRow key={name}>
                    <Guide $line={i === debugClasses.length - 1 ? "up" : "full"} $branch>
                      <ExpandButton aria-label={`Expand ${name}`}><ExpandIcon /></ExpandButton>
                    </Guide>
                    <DebugLabel>
                      <Tick type="checkbox" defaultChecked={on} />
                      {name}
                    </DebugLabel>
                  </TreeRow>
                ))}
              </DebugList>
            </Sunken>
          </Dock>

          <Dock $share={375}>
            <TitleRow text="Doc&umentation" />
            <DocRow>
              <DiagramIcon />
              <DocName htmlFor="doc-modified">library management system</DocName>
              <DocCheck id="doc-modified" type="checkbox" />
            </DocRow>
            <DocText aria-label="Documentation text" />
            <BottomTabs>
              <BottomTab $on $w={147}><Mnemonic text="Doc&umentation" /></BottomTab>
              <BottomTab $w={166}><Mnemonic text="Co&mmand history" /></BottomTab>
              <BottomTab $w={60}><Mnemonic text="&Log" /></BottomTab>
            </BottomTabs>
          </Dock>
        </DockColumn>

        <Center>
          <TabStrip>
            <NewTabButton aria-label="New diagram"><NewTabIcon /></NewTabButton>
            <CanvasTab>
              <DiagramIcon s={24} useCase />
              <CanvasTabName><Mnemonic text="lib&rary management system" /></CanvasTabName>
              <TabClose aria-label="Close tab"><TabCloseIcon /></TabClose>
            </CanvasTab>
          </TabStrip>
          <CanvasFrame>
            <UseCaseDiagram />
            <HScroll>
              <ScrollButton aria-label="Scroll left"><ArrowIcon dir="left" /></ScrollButton>
              <Room $share={215} />
              <Thumb $share={822} />
              <Room $share={567} />
              <ScrollButton aria-label="Scroll right"><ArrowIcon dir="right" /></ScrollButton>
            </HScroll>
          </CanvasFrame>
        </Center>

        <BirdDock>
          <TitleRow text="&Bird's eye view" />
          <BirdView />
        </BirdDock>
      </Workspace>

      <StatusBar>
        <ReadyCell>Ready.</ReadyCell>
        <Spacer />
        <ZoomCell>
          187%
          <ZoomButtons>
            <ZoomButton>Fit</ZoomButton>
            <ToolRule />
            <ZoomButton>100%</ZoomButton>
          </ZoomButtons>
        </ZoomCell>
        <StatusCell><IconButton aria-label="Zoom out"><MagnifierIcon /></IconButton></StatusCell>
        <SliderCell>
          <ZoomSlider type="range" min="0" max="100" defaultValue="37" aria-label="Zoom" />
        </SliderCell>
        <StatusCell><IconButton aria-label="Zoom in"><MagnifierIcon plus /></IconButton></StatusCell>
      </StatusBar>
    </Window>
  );
}
